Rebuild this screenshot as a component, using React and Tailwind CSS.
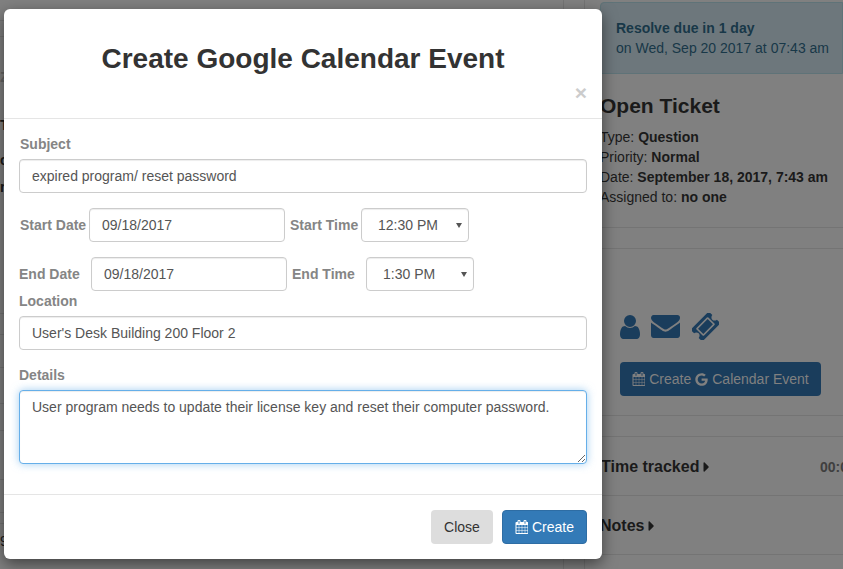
import React from "react";
import { FaGoogle, FaCaretRight } from "react-icons/fa";

const CalendarIcon = ({ className }) => (
  <svg viewBox="0 0 1664 1792" className={className} fill="currentColor">
    <path d="M192 1664h288v-288h-288v288zm352 0h320v-288h-320v288zm-352-352h288v-320h-288v320zm352 0h320v-320h-320v320zm-352-384h288v-288h-288v288zm736 736h320v-288h-320v288zm-384-736h320v-288h-320v288zm768 736h288v-288h-288v288zm-384-352h320v-320h-320v320zm-352-864v-288q0-13-9.5-22.5t-22.5-9.5h-64q-13 0-22.5 9.5t-9.5 22.5v288q0 13 9.5 22.5t22.5 9.5h64q13 0 22.5-9.5t9.5-22.5zm736 864h288v-320h-288v320zm-384-384h320v-288h-320v288zm384 0h288v-288h-288v288zm32-480v-288q0-13-9.5-22.5t-22.5-9.5h-64q-13 0-22.5 9.5t-9.5 22.5v288q0 13 9.5 22.5t22.5 9.5h64q13 0 22.5-9.5t9.5-22.5zm384-64v1280q0 52-38 90t-90 38h-1408q-52 0-90-38t-38-90v-1280q0-52 38-90t90-38h128v-96q0-66 47-113t113-47h64q66 0 113 47t47 113v96h384v-96q0-66 47-113t113-47h64q66 0 113 47t47 113v96h128q52 0 90 38t38 90z" />
  </svg>
);

const UserIcon = ({ className }) => (
  <svg viewBox="256 128 1280 1536" className={className} fill="currentColor">
    <path d="M1536 1399q0 109-62.5 187t-150.5 78h-854q-88 0-150.5-78t-62.5-187q0-85 8.5-160.5t31.5-152 58.5-131 94-89 134.5-34.5q131 128 313 128t313-128q76 0 134.5 34.5t94 89 58.5 131 31.5 152 8.5 160.5zm-256-887q0 159-112.5 271.5t-271.5 112.5-271.5-112.5-112.5-271.5 112.5-271.5 271.5-112.5 271.5 112.5 112.5 271.5z" />
  </svg>
);

const EnvelopeIcon = ({ className }) => (
  <svg viewBox="0 256 1792 1408" className={className} fill="currentColor">
    <path d="M1792 710v794q0 66-47 113t-113 47h-1472q-66 0-113-47t-47-113v-794q44 49 101 87 362 246 497 345 57 42 92.5 65.5t94.5 48 110 24.5h2q51 0 110-24.5t94.5-48 92.5-65.5q170-123 498-345 57-39 100-87zm0-294q0 79-49 151t-122 123q-376 261-468 325-10 7-42.5 30.5t-54 38-52 32.5-57.5 27-50 9h-2q-23 0-50-9t-57.5-27-52-32.5-54-38-42.5-30.5q-91-64-262-182.5t-205-142.5q-62-42-117-115.5t-55-136.5q0-78 41.5-130t118.5-52h1472q65 0 112.5 47t47.5 113z" />
  </svg>
);

const TicketIcon = ({ className }) => (
  <svg viewBox="90 90 1612 1612" className={className} fill="currentColor">
    <path d="M1024 452l316 316-572 572-316-316zm-211 979l618-618q19-19 19-45t-19-45l-362-362q-18-18-45-18t-45 18l-618 618q-19 19-19 45t19 45l362 362q18 18 45 18t45-18zm889-637l-907 908q-37 37-90.5 37t-90.5-37l-126-126q56-56 56-136t-56-136-136-56-136 56l-125-126q-37-37-37-90.5t37-90.5l907-906q37-37 90.5-37t90.5 37l125 125q-56 56-56 136t56 136 136 56 136-56l126 125q37 37 37 90.5t-37 90.5z" />
  </svg>
);

const inputCls =
  "h-[34px] rounded-[4px] border border-[#ccc] bg-white px-3 text-sm text-[#555] shadow-[inset_0_1px_1px_rgba(0,0,0,0.075)] outline-none";
const labelCls = "text-sm font-bold leading-5 text-[#858585] whitespace-nowrap";

function TimeSelect({ value }) {
  return (
    <div className="relative w-[108px] shrink-0">
      <select defaultValue={value} className={`${inputCls} w-full appearance-none pl-4`}>
        <option>{value}</option>
      </select>
      <span className="pointer-events-none absolute right-[7px] top-[15px] h-0 w-0 border-x-[3px] border-t-[5px] border-x-transparent border-t-[#555]" />
    </div>
  );
}

function Background() {
  return (
    <div className="flex h-[569px] w-[843px] bg-[#808080]">
      {/* page table behind the dialog */}
      <div className="flex h-full w-[600px] shrink-0">
        <div className="h-full w-[564px] shrink-0 border-r border-[#747474] text-sm text-[#1a1a1a]">
          <div className="h-[21px] border-b border-[#747474]" />
          <div className="h-[16px] border-b border-[#747474]" />
          <div className="h-[277px] border-b border-[#747474] pt-[30px] font-bold leading-5">
            <div className="text-[#666]">Z</div>
            <div className="mt-[28px]">T</div>
            <div className="mt-[15px]">c</div>
            <div className="mt-[7px]">r</div>
          </div>
          <div className="h-[21px] border-b border-[#747474]" />
          <div className="h-[33px] border-b border-[#747474]" />
          <div className="h-[36px] border-b border-[#747474]" />
          <div className="h-[27px] border-b border-[#747474]" />
          <div className="h-[49px] border-b border-[#747474]" />
          <div className="h-[33px] border-b border-[#747474]" />
          <div className="h-[11px] border-b border-[#747474]" />
          <div className="pt-[7px] leading-5">9</div>
        </div>
        <div className="h-full w-[21px] shrink-0 border-r border-[#747474]" />
      </div>

      {/* ticket sidebar */}
      <div className="w-[243px] shrink-0 font-['Liberation_Sans',sans-serif] text-sm text-[#1a1a1a]">
        <div className="mt-[2px] h-[72px] rounded-tl-[4px] border border-[#5f7378] bg-[#6d777c] py-[15px] pl-[15px] leading-5 text-[#183848]">
          <div className="font-bold">Resolve due in 1 day</div>
          <div>on Wed, Sep 20 2017 at 07:43 am</div>
        </div>

        <div className="h-[154px] border-b border-[#747474] pt-[18px]">
          <h3 className="text-[21px] font-bold leading-7">Open Ticket</h3>
          <div className="mt-[7px] leading-5">
            <div>Type: <b>Question</b></div>
            <div>Priority: <b>Normal</b></div>
            <div>Date: <b>September 18, 2017, 7:43 am</b></div>
            <div>Assigned to: <b>no one</b></div>
          </div>
        </div>

        <div className="h-[21px] border-b border-[#747474]" />

        <div className="h-[167px] border-b border-[#747474] pl-5 pt-[64px]">
          <div className="flex items-center text-[#1a3d5c]">
            <UserIcon className="h-6 w-5" />
            <EnvelopeIcon className="ml-[11px] h-[23px] w-[29px]" />
            <TicketIcon className="ml-3 h-[27px] w-[27px]" />
          </div>
          <div className="mt-[22px] flex h-[34px] w-[201px] items-center justify-center gap-1 rounded-[4px] bg-[#1a3d5c] text-[#808080]">
            <CalendarIcon className="h-[14px] w-[13px]" />
            <span>Create</span>
            <FaGoogle className="h-[13px] w-[13px]" />
            <span>Calendar Event</span>
          </div>
        </div>

        <div className="h-[21px] border-b border-[#747474]" />

        <div className="flex h-[59px] items-center justify-between border-b border-[#747474] pl-px pt-[2px]">
          <div className="flex items-center gap-[4px] text-base font-bold">
            Time tracked <FaCaretRight className="h-4 w-[7px]" />
          </div>
          <div className="w-[23px] overflow-hidden whitespace-nowrap text-sm font-bold text-[#3f3f3f]">00:00:00</div>
        </div>

        <div className="flex h-[59px] items-center gap-[4px] border-b border-[#747474] pt-[2px] text-base font-bold">
          Notes <FaCaretRight className="h-4 w-[7px]" />
        </div>
      </div>
    </div>
  );
}

export default function App() {
  return (
    <div className="relative h-[569px] w-[843px] overflow-hidden font-['Liberation_Sans',sans-serif]">
      <Background />

      <div className="absolute left-1 top-[9px] h-[550px] w-[598px] rounded-[6px] bg-white shadow-[0_5px_15px_rgba(0,0,0,0.5)]">
        <div className="flex h-[110px] flex-col border-b border-[#e5e5e5] p-[15px]">
          <h2 className="mt-4 text-center text-[28px] font-bold leading-[38px] text-[#333]">
            Create Google Calendar Event
          </h2>
          <div className="mt-[5px] h-[19px] self-end text-[21px] font-bold leading-[19px] text-[#ccc]">×</div>
        </div>

        <div className="flex flex-col px-[15px] pb-[30px] pt-[15px]">
          <label className={`${labelCls} mb-[5px] pl-px`}>Subject</label>
          <input readOnly value="expired program/ reset password" className={`${inputCls} mb-[15px] w-full`} />

          <div className="mb-[15px] flex items-center pl-px">
            <label className={`${labelCls} w-[69px]`}>Start Date</label>
            <input readOnly value="09/18/2017" className={`${inputCls} w-[196px]`} />
            <label className={`${labelCls} ml-[5px] w-[71px]`}>Start Time</label>
            <TimeSelect value="12:30 PM" />
          </div>

          <div className="flex items-center">
            <label className={`${labelCls} w-[72px]`}>End Date</label>
            <input readOnly value="09/18/2017" className={`${inputCls} w-[196px]`} />
            <label className={`${labelCls} ml-[5px] w-[74px]`}>End Time</label>
            <TimeSelect value="1:30 PM" />
          </div>

          <label className={`${labelCls} mb-[5px]`}>Location</label>
          <input readOnly value="User's Desk Building 200 Floor 2" className={`${inputCls} mb-[15px] w-full`} />

          <label className={`${labelCls} mb-[5px]`}>Details</label>
          <textarea
            readOnly
            value="User program needs to update their license key and reset their computer password."
            className="block h-[74px] w-full rounded-[4px] border border-[#66afe9] bg-white px-3 py-[6px] text-sm leading-5 text-[#555] shadow-[inset_0_1px_1px_rgba(0,0,0,0.075),0_0_8px_rgba(102,175,233,0.6)] outline-none"
          />
        </div>

        <div className="flex h-[65px] items-start justify-end gap-[9px] border-t border-[#e5e5e5] p-[15px]">
          <button className="h-[34px] w-[62px] rounded-[4px] bg-[#ddd] text-sm text-[#333]">Close</button>
          <button className="flex h-[34px] w-[85px] items-center justify-center gap-1 rounded-[4px] border border-[#2e6da4] bg-[#337ab7] text-sm text-white">
            <CalendarIcon className="h-[14px] w-[13px]" />
            Create
          </button>
        </div>
      </div>
    </div>
  );
}
